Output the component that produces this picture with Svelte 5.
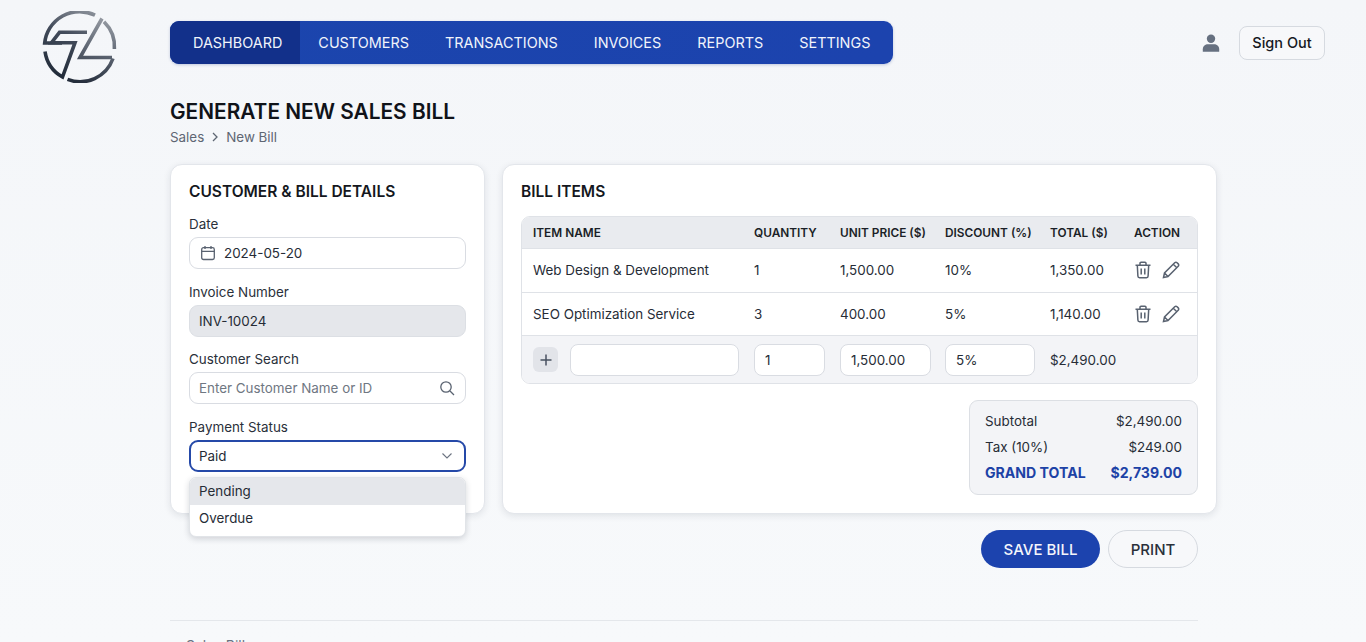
<script>
  const navItems = ['DASHBOARD', 'CUSTOMERS', 'TRANSACTIONS', 'INVOICES', 'REPORTS', 'SETTINGS'];
  const items = [
    { name: 'Web Design & Development', qty: '1', price: '1,500.00', discount: '10%', total: '1,350.00' },
    { name: 'SEO Optimization Service', qty: '3', price: '400.00', discount: '5%', total: '1,140.00' }
  ];
</script>

<div class="page">
  <header class="topbar">
    <svg class="logo" viewBox="0 0 76 72" aria-label="Logo">
      <defs>
        <linearGradient id="steel" gradientUnits="userSpaceOnUse" x1="50" y1="0" x2="20" y2="70">
          <stop offset="0" stop-color="#8a9099" />
          <stop offset="0.4" stop-color="#434c5b" />
          <stop offset="1" stop-color="#1f2937" />
        </linearGradient>
        <linearGradient id="steel2" gradientUnits="userSpaceOnUse" x1="60" y1="5" x2="40" y2="72">
          <stop offset="0" stop-color="#979ca4" />
          <stop offset="0.5" stop-color="#5d6572" />
          <stop offset="1" stop-color="#252e3c" />
        </linearGradient>
      </defs>
      <g fill="none" stroke-width="3.6">
        <path stroke="url(#steel)" d="M53 4.200A35 35 0 0 0 2.700 32H20" />
        <path stroke="url(#steel)" d="M45 21.300H17.500L9.500 31.700H33L20.500 66A35 35 0 0 1 3 40.500" />
        <path stroke="url(#steel2)" d="M62 10.800A35 35 0 0 1 72.400 38" />
        <path stroke="url(#steel2)" d="M60 7.500L38 46.500H70" />
        <path stroke="url(#steel2)" d="M71 47.500A35 35 0 0 1 25.500 68.400" />
      </g>
    </svg>
    <nav class="nav">
      {#each navItems as item, i}
        <span class="nav-item" class:active={i === 0}>{item}</span>
      {/each}
    </nav>
    <div class="account">
      <svg class="user" viewBox="0 0 18 18" aria-hidden="true">
        <circle cx="9" cy="4.700" r="4.200" />
        <path d="M.8 17.700v-2.500c0-3.300 2.700-5 5-5h6.400c2.300 0 5 1.700 5 5v2.500z" />
      </svg>
      <button type="button" class="signout">Sign Out</button>
    </div>
  </header>

  <main class="content">
    <h1>GENERATE NEW SALES BILL</h1>
    <div class="crumbs">
      <span>Sales</span>
      <svg viewBox="0 0 8 10" aria-hidden="true"><path d="M2 1l4 4-4 4" /></svg>
      <span>New Bill</span>
    </div>

    <div class="columns">
      <section class="card details">
        <h2>CUSTOMER &amp; BILL DETAILS</h2>

        <div class="field">
          <span class="label">Date</span>
          <div class="input date">
            <svg class="icon" viewBox="0 0 16 16" aria-hidden="true">
              <rect x="1.700" y="2.700" width="12.600" height="11.800" rx="1.800" />
              <path d="M1.700 6.300h12.600M5 1v3M11 1v3" />
            </svg>
            <span>2024-05-20</span>
          </div>
        </div>

        <div class="field">
          <span class="label">Invoice Number</span>
          <div class="input readonly">INV-10024</div>
        </div>

        <div class="field">
          <span class="label">Customer Search</span>
          <div class="input between">
            <span class="placeholder">Enter Customer Name or ID</span>
            <svg class="icon" viewBox="0 0 16 16" aria-hidden="true">
              <circle cx="7" cy="7" r="5.200" />
              <path d="M11 11l4 4" />
            </svg>
          </div>
        </div>

        <div class="field status">
          <span class="label">Payment Status</span>
          <div class="input between focused">
            <span>Paid</span>
            <svg class="chevron" viewBox="0 0 12 8" aria-hidden="true"><path d="M1.500 1.500L6 6l4.500-4.500" /></svg>
          </div>
          <ul class="menu">
            <li class="hover">Pending</li>
            <li>Overdue</li>
          </ul>
        </div>
      </section>

      <section class="card bill">
        <h2>BILL ITEMS</h2>
        <div class="table">
          <div class="row head">
            <span>ITEM NAME</span>
            <span>QUANTITY</span>
            <span>UNIT PRICE ($)</span>
            <span>DISCOUNT (%)</span>
            <span>TOTAL ($)</span>
            <span>ACTION</span>
          </div>
          {#each items as item}
            <div class="row item">
              <span>{item.name}</span>
              <span>{item.qty}</span>
              <span>{item.price}</span>
              <span>{item.discount}</span>
              <span>{item.total}</span>
              <span class="actions">
                <svg viewBox="0 0 18 18" aria-hidden="true">
                  <path d="M1.500 4.200h15M6 4V2.300c0-.6.4-1 1-1h4c.6 0 1 .4 1 1V4M3.300 4.200l.6 10.900c0 .9.700 1.600 1.600 1.600h7c.9 0 1.600-.7 1.600-1.600l.6-10.900M7.200 7.500v6M10.800 7.500v6" />
                </svg>
                <svg viewBox="0 0 18 18" aria-hidden="true">
                  <path d="M1.500 16.500l1-4.500L12.700 1.800c.7-.7 1.700-.7 2.400 0l1.100 1.100c.7.700.7 1.700 0 2.400L6 15.500zM2.500 12L6 15.500M11.300 3.200l3.500 3.500" />
                </svg>
              </span>
            </div>
          {/each}
          <div class="row add">
            <span class="add-name">
              <button type="button" class="plus" aria-label="Add item">
                <svg viewBox="0 0 12 12" aria-hidden="true"><path d="M6 .5v11M.5 6h11" /></svg>
              </button>
              <span class="cell-input name"></span>
            </span>
            <span class="cell-input qty">1</span>
            <span class="cell-input price">1,500.00</span>
            <span class="cell-input disc">5%</span>
            <span>$2,490.00</span>
            <span></span>
          </div>
        </div>

        <div class="summary">
          <div class="sum-row"><span>Subtotal</span><span>$2,490.00</span></div>
          <div class="sum-row"><span>Tax (10%)</span><span>$249.00</span></div>
          <div class="sum-row grand"><span>GRAND TOTAL</span><span>$2,739.00</span></div>
        </div>
      </section>
    </div>

    <div class="buttons">
      <button type="button" class="save">SAVE BILL</button>
      <button type="button" class="print">PRINT</button>
    </div>

    <footer class="footer">Sales Bill</footer>
  </main>
</div>

<style>
  :global(body) {
    margin: 0;
    overflow: hidden;
    background: #f6f8fb;
  }

  .page {
    height: 642px;
    overflow: hidden;
    font-family: Inter, "Liberation Sans", sans-serif;
    color: #1f2937;
    background: linear-gradient(180deg, #f4f6f9 0%, #f7f9fb 100%);
  }

  .topbar {
    display: flex;
    align-items: flex-start;
    padding: 11px 41px 0 42px;
  }

  .logo {
    width: 76px;
    height: 72px;
    flex: none;
  }

  .nav {
    display: flex;
    height: 43px;
    margin: 10px 0 0 52px;
    padding-right: 5px;
    border-radius: 9px;
    overflow: hidden;
    background: linear-gradient(90deg, #1b45ad, #1c43ae);
    box-shadow: 0 1px 3px rgba(30, 58, 138, 0.25);
  }

  .nav-item {
    display: flex;
    align-items: center;
    padding: 0 18px;
    font-size: 14.420px;
    color: #f1f4fb;
  }

  .nav-item:first-child {
    padding-left: 23px;
  }

  .nav-item.active {
    background: #12308a;
  }

  .account {
    display: flex;
    align-items: center;
    gap: 19px;
    margin: 15px 0 0 auto;
  }

  .user {
    width: 18px;
    height: 18px;
    fill: #667080;
  }

  .signout {
    width: 86px;
    height: 34px;
    padding: 0 0 2px;
    border: 1px solid #d6dae0;
    border-radius: 8px;
    background: #f7f8fa;
    color: #16191f;
    font: 500 14.500px Inter, "Liberation Sans", sans-serif;
  }

  .content {
    width: 1028px;
    margin: 15px 0 0 170px;
  }

  h1 {
    margin: 0;
    height: 28px;
    font-size: 20.850px;
    line-height: 28px;
    font-weight: 600;
    color: #101319;
  }

  .crumbs {
    display: flex;
    align-items: center;
    gap: 7px;
    height: 20px;
    margin-top: 1px;
    font-size: 13.400px;
    color: #5e6673;
  }

  .crumbs svg {
    width: 8px;
    height: 10px;
    fill: none;
    stroke: #5e6673;
    stroke-width: 1.300;
  }

  .columns {
    display: flex;
    gap: 17px;
    margin-top: 17px;
    width: 1047px;
  }

  .card {
    box-sizing: border-box;
    height: 350px;
    border: 1px solid #e3e6eb;
    border-radius: 12px;
    background: #fff;
    box-shadow: 0 2px 7px rgba(31, 41, 55, 0.1);
  }

  .details {
    width: 315px;
    padding: 17px 18px 0;
  }

  .bill {
    width: 715px;
    padding: 17px 18px 0;
  }

  h2 {
    margin: 0;
    height: 20px;
    font-size: 15.500px;
    line-height: 20px;
    font-weight: 600;
    color: #14171d;
  }

  .field {
    display: flex;
    flex-direction: column;
    gap: 3px;
    margin-top: 12.500px;
  }

  h2 + .field {
    margin-top: 12px;
  }

  .label {
    height: 20px;
    font-size: 13.400px;
    line-height: 20px;
    color: #2a303a;
  }

  .input {
    box-sizing: border-box;
    display: flex;
    align-items: center;
    gap: 8px;
    height: 32px;
    padding: 0 9px 0 10px;
    border: 1px solid #d9dce2;
    border-radius: 9px;
    background: #fff;
    font-size: 13.400px;
    color: #262c36;
  }

  .input.readonly {
    background: #e5e7eb;
    border-color: #dcdfe4;
  }

  .input.readonly,
  .input.between {
    padding-left: 9px;
  }

  .input.date {
    gap: 7px;
    padding-left: 10px;
  }

  .between {
    justify-content: space-between;
  }

  .placeholder {
    color: #6f7782;
  }

  .input.focused {
    border: 2px solid #2549a8;
    padding: 0 8px;
  }

  .icon {
    width: 16px;
    height: 16px;
    flex: none;
    margin-right: 1px;
    fill: none;
    stroke: #596270;
    stroke-width: 1.300;
  }

  .chevron {
    width: 12px;
    height: 8px;
    margin-right: 3px;
    fill: none;
    stroke: #6b7380;
    stroke-width: 1.100;
  }

  .status {
    position: relative;
  }

  .menu {
    position: absolute;
    top: 60px;
    left: 0;
    right: 0;
    z-index: 2;
    margin: 0;
    padding: 0 0 4px;
    list-style: none;
    overflow: hidden;
    border: 1px solid #e1e4e8;
    border-radius: 7px;
    background: #fff;
    box-shadow: 0 2px 6px rgba(31, 41, 55, 0.18);
    font-size: 13.400px;
    color: #262c36;
  }

  .menu li {
    display: flex;
    align-items: center;
    height: 27px;
    padding: 0 9px;
  }

  .menu li.hover {
    background: #e5e7eb;
  }

  .table {
    margin-top: 14px;
    border: 1px solid #dfe2e7;
    border-radius: 9px;
    overflow: hidden;
    font-size: 13.400px;
    color: #262c36;
  }

  .row {
    display: grid;
    grid-template-columns: 220px 86px 105px 105px 84px 76px;
    align-items: center;
    border-top: 1px solid #dfe2e7;
  }

  .row > span {
    padding-left: 12px;
  }

  .row > span:first-child {
    padding-left: 11px;
  }

  .row.head {
    height: 31px;
    border-top: 0;
    background: #e9ebef;
    font-size: 11.850px;
    font-weight: 600;
    color: #1b1f27;
  }

  .row.item {
    height: 42.500px;
    background: #fff;
  }

  .actions {
    display: flex;
    gap: 10px;
    color: #596270;
  }

  .actions svg {
    width: 18px;
    height: 18px;
    fill: none;
    stroke: currentColor;
    stroke-width: 1.500;
  }

  .row.add {
    height: 47px;
    background: #f3f4f7;
  }

  .add-name {
    display: flex;
    align-items: center;
    gap: 12px;
  }

  .plus {
    display: flex;
    align-items: center;
    justify-content: center;
    flex: none;
    width: 25px;
    height: 25px;
    padding: 0;
    border: 0;
    border-radius: 6px;
    background: #e2e4e9;
  }

  .plus svg {
    width: 12px;
    height: 12px;
    stroke: #485160;
    stroke-width: 1.500;
  }

  .row > .cell-input {
    box-sizing: border-box;
    display: flex;
    align-items: center;
    height: 32px;
    padding-left: 10px;
    border: 1px solid #d9dce2;
    border-radius: 8px;
    background: #fff;
    margin-left: 12px;
  }

  .cell-input.name {
    box-sizing: border-box;
    display: block;
    width: 169px;
    height: 32px;
    border: 1px solid #d9dce2;
    border-radius: 8px;
    background: #fff;
  }

  .qty {
    width: 71px;
  }

  .price {
    width: 91px;
  }

  .disc {
    width: 90px;
  }

  .summary {
    box-sizing: border-box;
    width: 229px;
    height: 95px;
    margin: 16px 0 0 auto;
    padding: 7px 15px 0;
    border: 1px solid #dcdfe4;
    border-radius: 9px;
    background: #f3f4f7;
    font-size: 13.400px;
    color: #262c36;
  }

  .sum-row {
    display: flex;
    justify-content: space-between;
    height: 26px;
    line-height: 26px;
  }

  .grand {
    font-weight: 700;
    font-size: 14.100px;
    color: #1d42a6;
  }

  .buttons {
    display: flex;
    justify-content: flex-end;
    gap: 8px;
    margin-top: 16px;
  }

  .buttons button {
    height: 38px;
    padding: 0;
    border-radius: 19px;
    font: 500 15px Inter, "Liberation Sans", sans-serif;
  }

  .save {
    width: 119px;
    border: 0;
    background: #1c43ae;
    color: #f4f6fb;
  }

  .print {
    width: 90px;
    border: 1px solid #d6dae0;
    background: #f7f8fa;
    color: #2a303a;
  }

  .footer {
    margin-top: 52px;
    padding: 16px 16px 0;
    border-top: 1px solid #e4e7eb;
    font-size: 14px;
    color: #6b7280;
  }
</style>
